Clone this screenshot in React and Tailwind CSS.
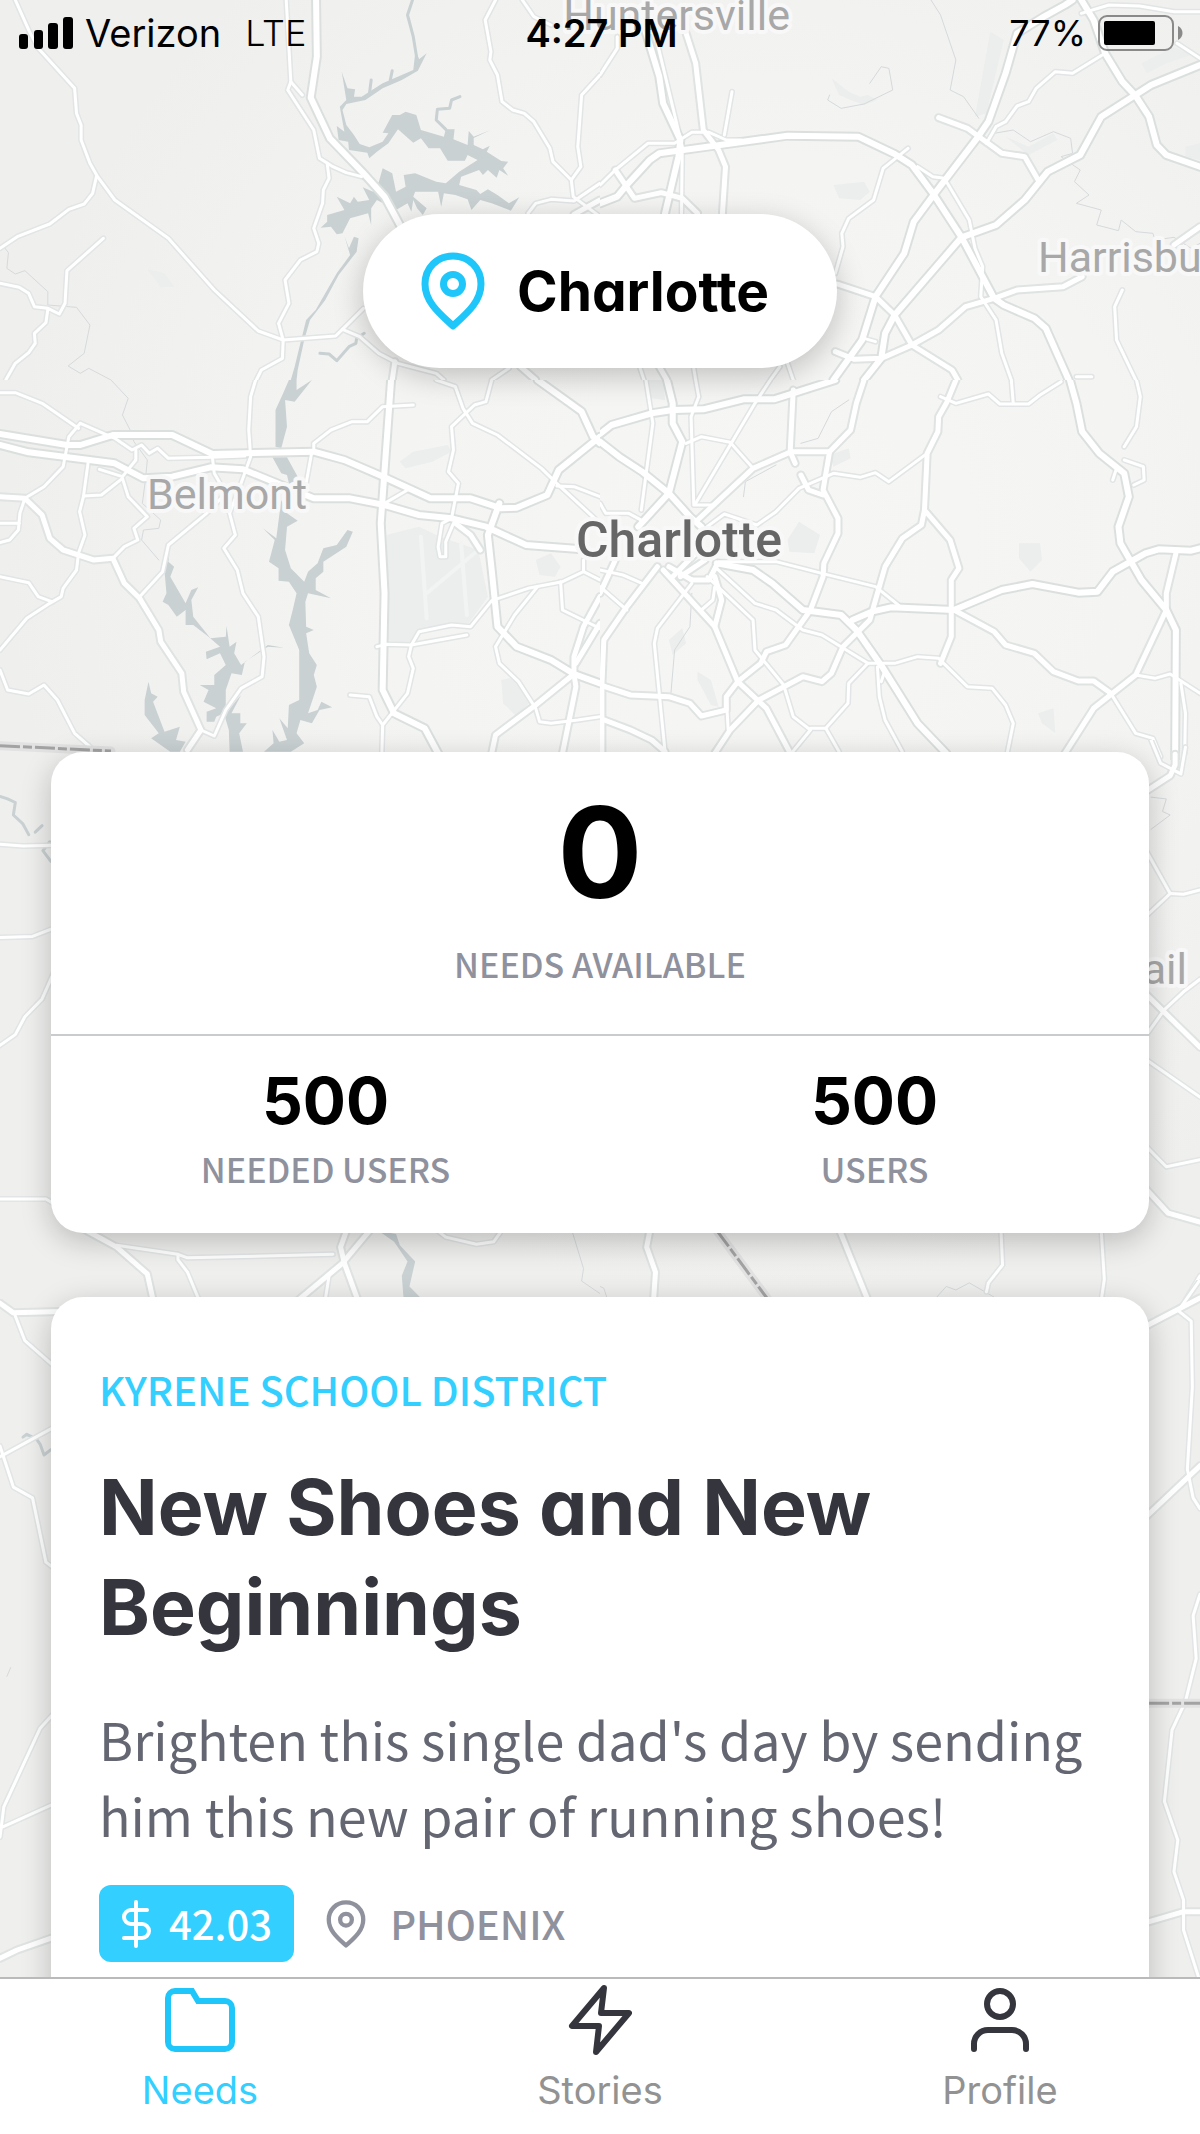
import React from "react";

// Each tile lists its own geometry in local units; the map stitches them together.
const tiles = [
  {
    x: 0, y: 0, w: 600, h: 380, vw: 1568, vh: 1140,
    water: [
      "1086 150 1095 178 1115 160 1092 212 1050 240 1000 265 955 300 905 312 895 330 905 375 925 405 940 432 965 442 1000 425 1015 400 1000 398 1025 345 1045 345 1060 335 1088 345 1100 390 1160 410 1165 388 1188 388 1185 418 1222 435 1225 393 1238 410 1282 390 1238 414 1238 435 1262 448 1280 437 1272 455 1310 483 1328 485 1315 505 1328 527 1305 510 1298 533 1275 510 1262 525 1252 510 1205 530 1200 555 1245 570 1255 582 1275 568 1300 585 1330 610 1357 592 1335 632 1285 610 1255 600 1232 630 1222 598 1190 585 1160 580 1153 620 1145 575 1085 575 1080 590 1115 625 1105 645 1090 625 1080 600 1075 635 1065 610 1035 630 985 600 970 625 970 675 962 640 915 655 895 700 880 703 865 680 838 683 855 665 855 645 900 630 880 590 915 610 925 590 935 605 965 600 948 562 975 575 990 545 1000 505 1025 520 1035 575 1060 560 1055 525 1085 520 1140 545 1165 550 1200 515 1248 480 1222 465 1215 482 1170 482 1150 445 1120 445 1100 415 1080 428 1040 388 1015 430 985 455 965 475 960 458 912 450 910 425 885 420 880 378 900 395 888 320 905 300 893 215 908 265 928 268 925 290 945 290 1000 250 1080 210",
      "900 708 912 745 925 710 937 715 932 755 885 825 850 900 810 960 795 1020 778 1110 775 1140 760 1140 770 1100 785 1030 800 960 825 930 880 820 915 765",
    ],
    creek: [
      "1078 0 1065 45 1080 110 1090 180",
      "1202 290 1180 300 1175 325 1143 328 1140 360 1165 388",
      "836 1060 860 1062 880 1082 912 1040 930 1030 932 1015 952 1000",
      "965 285 970 240", "1020 240 1025 212",
    ],
    thin: ["10 740 22 758 18 805 40 822 65 812 125 875 125 915 200 922 235 975 220 1060 178 1098 210 1120 232 1105 290 1140"],
    park: ["385 808 430 820 455 860 420 862"],
    minor: [
      "40 0 77 95 100 145 195 265 200 340 212 375 212 420 235 490 255 530 300 600 440 715 560 870 675 993 740 1020 877 1008 895 988 950 925",
      "252 530 242 580 220 612 180 628 130 672 45 710 0 745",
      "748 0 760 245 790 285",
      "760 245 752 270 820 390 835 475 870 500 905 518 945 530",
      "855 490 860 535 845 570 843 610 820 685 833 730 828 755 785 780 745 840 755 910 728 970 740 1020 738 1075 683 1110 670 1140",
      "270 715 175 812 170 910 155 942 125 925 90 920 75 880 50 862 0 850",
      "125 928 120 968 90 1000 92 1030 75 1058 40 1090 15 1140",
      "895 988 940 1010 990 1060 1040 1090 1140 1120 1160 1140",
      "1295 0 1268 60 1283 155 1280 180 1300 225 1312 305 1340 330 1370 340 1395 365 1437 445 1445 485 1493 540 1498 590 1568 650",
      "1568 225 1520 285 1510 440 1518 500 1493 540",
      "1365 0 1395 50 1440 75",
      "1380 640 1400 610 1440 598 1500 603 1568 550",
      "1285 1140 1330 1105",
    ],
    road: ["1032 1085 1025 1140", "1500 643 1568 600", "1360 1100 1400 1140"],
    highway: ["826 0 828 170 812 293 862 415 950 520 1005 590 1045 675"],
  },
  {
    x: 600, y: 0, w: 600, h: 380, vw: 1568, vh: 1140,
    park: [
      "1020 95 1055 120 1010 340 980 350",
      "605 235 650 275 680 290 700 285 725 300 690 315 655 300 625 285",
      "610 555 690 545 705 575 680 600 625 595",
      "1060 410 1120 440 1185 400 1195 420 1120 465",
      "1415 190 1500 140 1545 165 1480 190 1430 220",
      "1530 440 1568 430 1568 480 1530 470",
    ],
    thin: [
      "865 0 890 45 930 180 915 270 950 290 990 355",
      "1030 400 1080 390 1125 425 1185 395 1230 415 1235 460 1205 470 1255 510 1240 545 1278 585 1245 610 1310 630 1298 675 1355 692 1362 660 1400 695 1445 700 1450 720 1500 712 1545 745 1568 730",
      "600 285 595 300 630 325 690 312 765 270 755 205 735 200 705 250",
    ],
    minor: [
      "150 130 215 440 213 640",
      "345 275 325 405",
      "0 555 40 510 125 430 195 430 240 397 285 397 330 420 370 420",
      "0 225 45 145 45 110",
      "1320 160 1235 220 1190 215 1140 265 1120 305 1090 318 1060 365 1035 380 1010 430",
      "1258 40 1330 15 1410 18 1500 35 1568 35",
      "805 445 740 505 715 600 650 655 632 700 635 740 615 820",
      "830 500 870 530 900 535 965 660 980 745 1000 800 995 890 1035 960 1050 1060 1075 1140",
      "690 1015 720 1025",
      "1365 870 1345 920 1350 1020 1400 1140",
      "1245 1130 1285 1130", "105 1105 115 1140", "245 1105 250 1140", "490 1090 505 1140", "470 1100 445 1140",
      "1508 130 1568 175",
    ],
    road: [
      "225 100 250 190 270 390 310 450 328 500 320 640",
      "40 510 90 595 160 578 215 595 255 640",
      "885 353 960 385 1050 460 1110 470 1145 540",
      "1568 680 1500 735",
      "620 852 720 890 770 945 815 1035 920 1110 935 1140",
      "615 1055 665 1078 735 1075 815 1035 885 990 955 920 1030 895 1090 870 1210 860 1260 830",
      "155 1100 175 1140",
    ],
    highway: [
      "1235 0 1215 15 1160 50 1090 100 1060 220 1015 365 985 415 875 580 820 665 795 760 720 890 685 1020 610 1140",
      "1258 0 1290 60 1320 160 1365 245 1400 288 1435 350 1455 435 1480 465 1568 500",
      "1568 195 1440 255 1310 350 1255 465 1170 515 1110 600 1035 675 945 712 770 945 745 1000 735 1075 690 1140",
      "0 610 45 590 70 555 130 480 155 460 300 437 490 407 675 410 770 462 815 495 870 580 945 712 1030 895 1055 915 1135 955 1165 985 1225 1140",
      "118 90 155 230 165 310 210 420 205 470 170 640",
    ],
  },
  {
    x: 0, y: 380, w: 600, h: 380, vw: 1568, vh: 1140,
    park: [
      "1010 465 1095 440 1150 470 1250 510 1275 650 1225 730 1095 755 1075 795 1010 780",
      "1045 245 1080 215 1170 195 1180 215 1130 245 1060 265",
      "1400 540 1440 520 1465 560 1450 590 1410 585",
      "1310 900 1350 890 1390 960 1350 1010 1315 970",
    ],
    runway: ["1100 470 1115 715", "1205 490 1220 705", "1115 640 1250 510"],
    water: [
      "755 0 775 0 775 30 815 0 770 65 745 60 750 140 735 205 720 200 720 90 740 40",
      "712 232 750 232 778 290 770 310 755 310 750 285 735 280",
      "735 360 750 400 778 422 750 440 745 510 760 565 795 605 805 575 830 550 845 505 880 495 908 450 922 455 905 500 845 545 845 575 825 595 825 630 865 655 805 640 798 665 800 740 820 750 800 760 808 820 828 855 820 885 828 920 805 1000 830 990 840 965 868 982 835 990 815 1030 785 1020 775 1060 795 1090 760 1115 690 1115 715 1090 712 1050 730 1085 750 1080 730 1015 752 1045 755 975 782 960 782 810 755 735 765 690 775 640 755 605 728 602 728 565 703 545 718 480 687 445 722 475",
      "443 520 440 545 455 560 445 590 485 670 500 630 518 622 500 660 505 710 550 775 590 770 592 738 600 800 618 785 612 820 630 855 700 795 742 803 700 800 640 845 632 885 605 880 590 930 590 1000 630 945 605 1000 628 1000 628 1030 645 1030 625 1060 635 1115 600 1115 598 1050 585 1000 565 1010 560 1025 540 1025 540 995 565 985 532 965 545 930 522 915 560 915 560 885 590 855 575 820 540 838 538 815 575 800 545 770 505 735 485 735 485 690 462 710 440 675 425 665 435 640 430 575",
      "388 905 395 940 412 950 400 965 430 1055 470 1040 460 1080 485 1085 470 1115 445 1115 395 1075 415 1060 378 1005 378 960",
    ],
    thin: ["290 0 335 55 320 105 340 150 350 185 385 240 380 300 372 370 420 420 415 445 375 450 370 480 415 540"],
    minor: [
      "0 38 40 38 110 70 205 145",
      "210 130 180 170 165 260 115 320 65 355",
      "210 130 300 175 345 210 370 195 390 220 412 205 440 235 555 232 640 228",
      "230 250 218 350 208 395 222 465 205 520 200 570 165 625 160 650 130 670 70 715 0 810",
      "218 348 265 345 320 295 335 350 385 410 350 445 360 480 325 500 295 535",
      "355 210 355 240 320 290 260 268",
      "668 0 655 50 650 150 655 230 630 310 600 400 615 465 585 505 620 570 635 640 675 710 690 830 685 890 630 925 590 990 560 1068 525 1050",
      "555 232 560 280 590 340 540 400 440 495 425 575 365 650",
      "0 590 75 608 100 650 135 665",
      "0 430 50 430",
      "65 355 52 400 48 450 25 480 0 488",
      "0 870 20 930 75 942 115 915 150 960 195 1060 240 1105",
      "815 215 800 310",
      "820 215 820 190 865 150 920 125 960 125 1000 80 1080 75",
      "1140 0 1190 20 1210 85 1235 130 1300 165 1415 265 1455 310 1568 430",
      "1285 0 1270 65 1240 75 1180 140 1185 210 1172 275 1198 310 1180 415",
      "1180 415 1155 430 1145 500 1150 530 1165 530 1165 485 1185 430",
      "1455 318 1500 320 1568 350",
      "1005 370 1065 330",
      "985 800 1010 793 1075 795 1095 755 1180 735 1230 740 1285 662 1380 625 1470 605 1525 575 1525 540",
      "1075 795 1220 765",
      "1075 795 1068 830 1080 865 1065 940 1000 1035 998 1115",
      "915 945 965 950 985 1010 1000 1035",
      "1405 620 1345 705 1295 800 1305 850 1355 905 1400 985 1410 1025 1440 1030 1510 1020 1568 1010",
      "1465 605 1470 690 1568 745",
      "1525 575 1568 600",
    ],
    road: [
      "0 350 65 355 110 405 130 475 165 510 245 540 295 535 325 610 365 655 415 750 420 785 475 880 480 935 525 1050 490 1110",
      "1190 430 1230 465 1255 510",
      "1500 882 1500 830 1525 740 1568 650",
      "1505 850 1568 730",
      "1500 882 1505 920 1470 1120",
      "1500 882 1400 975 1295 1065 1285 1120",
    ],
    highway: [
      "0 162 175 195 210 195 295 165 450 165 555 222 820 215 900 240 1005 292 1125 355 1230 355 1310 385 1350 383 1430 345 1460 270 1568 170",
      "0 195 75 217 300 250 375 295 450 290 550 262 635 268 820 355 915 355 1005 375 1095 405 1180 415 1270 440 1375 495 1520 508",
      "1022 0 995 430 1005 640 1000 930 1030 1000 1110 1045 1145 1120",
      "1305 370 1275 465 1285 570 1300 740 1350 800 1440 840 1500 882 1568 910",
      "1405 0 1520 95 1550 170 1568 190",
    ],
    border: ["0 1097 290 1113"],
  },
  {
    x: 600, y: 380, w: 600, h: 380, vw: 1568, vh: 1140,
    park: [
      "520 425 575 465 560 520 495 515 490 480",
      "1095 490 1150 490 1155 540 1125 575 1095 535",
      "255 875 290 900 310 980 290 975 255 900",
      "180 780 215 745 225 790 190 825",
      "125 0 165 0 170 60 135 55",
      "600 225 650 205 655 235 610 260",
      "1145 1000 1185 985 1190 1060 1155 1030",
    ],
    thin: ["650 60 605 95 570 175 525 190", "240 640 235 740 195 810 185 945", "460 255 380 305 375 350"],
    minor: [
      "1400 885 1450 895 1490 882 1568 940",
      "1335 940 1400 1060 1445 1075 1465 1130",
      "1518 910 1530 1000 1528 1120",
      "890 50 930 70 1015 42 1045 72 1120 72 1150 45 1205 5",
      "1075 0 1080 70",
      "1402 0 1412 50 1402 140 1370 200",
      "1370 240 1420 260 1422 300 1395 315",
      "1350 265 1340 300",
      "855 220 755 305 720 278 680 292 610 280 520 325 460 395 410 435 325 402 280 440",
      "120 0 138 130 108 390",
      "250 0 258 50 238 110 245 370",
      "445 0 405 70 250 370",
      "225 190 265 170 340 187 400 265",
      "245 375 300 375",
      "310 545 460 545 580 580 720 620 785 680",
      "280 590 400 720 405 810 480 915 505 1010 550 1050 500 1120",
      "300 560 405 670 460 690 530 750 580 765 700 850 770 850 830 830 885 835 960 920 1025 925 1060 975 1080 1030 1065 1115",
      "700 850 650 910 648 970 590 1045 550 1045",
      "590 1045 625 1115",
      "725 860 730 950 745 1020 790 1115",
      "745 870 735 905",
      "240 610 150 745 142 790 160 1000 170 1115",
      "300 620 295 660 265 690",
      "330 950 335 1050",
      "0 370 15 400 75 400 115 425",
      "0 570 60 585 110 610",
      "0 620 70 690",
    ],
    road: [
      "505 30 497 215 510 250",
      "690 0 670 70 655 150 600 215 500 215 400 265 255 420",
      "600 215 583 330 622 415 622 460 585 550 583 590 550 690 485 795 435 815 420 850 360 905 330 950 330 990 265 1008 235 970 180 950 80 945 0 915",
      "930 0 905 70 885 110 883 155 855 220 848 390 840 435 790 475 745 560 705 720 635 800 605 880 580 905 530 890 415 960 340 1050 300 1120",
      "848 390 915 480 938 565 918 600 918 690 918 770 890 850",
      "925 690 1030 755 1060 795 1135 820 1185 875 1250 903 1290 903 1335 940",
      "1505 520 1480 640 1480 690 1400 885 1290 985 1215 1120",
      "525 285 545 330 583 345",
      "300 590 318 660 300 740",
      "165 570 300 740 360 905 435 985 495 1115",
      "150 560 70 680 10 780 5 915 5 1140",
      "0 640 40 540",
      "0 1015 80 1050 135 1080 170 1115",
      "190 590 250 520", "210 590 275 540", "240 600 285 600 305 555", "180 560 240 600",
    ],
    highway: [
      "175 0 190 70 190 130 215 185 180 340 100 440",
      "0 185 50 230 110 275 180 340 235 410 265 440",
      "0 162 30 135 135 100 190 90 270 88 375 58 455 58 615 0",
      "305 550 400 570 450 610 530 690 630 705 670 750 740 865 830 1030 905 1120",
      "660 720 710 695 760 682 925 690 1050 630 1130 612 1250 638 1300 635 1340 575 1425 520 1460 508 1545 512 1568 505",
      "1228 0 1245 70 1260 155 1305 220 1370 280 1382 350 1355 440 1360 490 1415 600 1480 690 1505 750 1503 1140",
    ],
  },
  {
    x: 0, y: 740, w: 600, h: 560, vw: 1568, vh: 1568,
    water: ["990 1375 1035 1383 1045 1415 1085 1460 1070 1530 1105 1568 1055 1568 1050 1500 1065 1460 1030 1405"],
    creek: ["0 158 20 165 40 175 35 210 60 235 75 265", "92 258 110 240", "130 285 112 310 133 340"],
    thin: ["1495 1375 1525 1480 1520 1515 1568 1550"],
    minor: [
      "0 292 60 297 145 295", "0 553 85 550 145 525", "145 640 110 725 65 775 40 825 0 855", "0 1285 120 1285 150 1305",
      "305 1415 465 1440 490 1450 870 1440",
      "465 1440 465 1455 490 1490 520 1568",
      "1145 1375 1165 1392 1245 1412 1290 1405 1310 1375",
      "860 1500 850 1568",
    ],
    road: ["220 1370 305 1420 385 1495 400 1568", "905 1375 890 1420 900 1465 935 1568", "965 1375 895 1465 780 1568"],
  },
  {
    x: 600, y: 740, w: 600, h: 560, vw: 1568, vh: 1568,
    thin: ["0 1530 10 1535 20 1568", "880 1560 905 1530 930 1540 965 1520 1030 1560", "1440 160 1480 165 1470 200 1490 210 1440 250"],
    minor: [
      "1048 1375 1052 1470 1015 1520 1010 1545", "1310 1375 1318 1510 1310 1568", "1568 1500 1530 1568",
      "1440 0 1465 65 1518 95 1530 20", "1425 305 1490 430 1425 495", "1490 430 1525 432 1568 420",
      "1568 670 1525 705 1475 755 1425 830", "1425 893 1568 1000", "1425 1135 1480 1195 1568 1175",
    ],
    road: ["130 1375 122 1420 145 1490 140 1568", "625 1370 700 1568", "1425 145 1490 100 1503 70 1503 40", "1425 710 1568 860", "1425 1255 1485 1325 1568 1350"],
    border: ["305 1373 440 1568"],
  },
  {
    x: 0, y: 1280, w: 600, h: 560, vw: 1568, vh: 1568,
    creek: ["60 440 70 432 85 440", "95 445 105 460 115 490 133 475"],
    thin: ["18 1110 28 1085"],
    minor: ["38 95 65 170 145 245", "145 410 0 495", "0 465 35 580 85 610 120 790 145 810", "145 1208 105 1255 10 1475 0 1560", "0 1535 145 1465"],
    road: ["0 65 35 92 160 88"],
  },
  {
    x: 600, y: 1280, w: 600, h: 560, vw: 1568, vh: 1568,
    minor: ["1510 85 1545 115 1548 300 1535 530 1550 610 1568 640", "1568 0 1515 80", "1568 880 1550 940 1558 1060 1530 1180 1495 1260 1475 1460 1510 1568"],
    road: ["1420 133 1568 50", "1420 670 1568 520"],
    border: ["1435 1185 1568 1185"],
  },
  {
    x: 0, y: 1840, w: 600, h: 294, vw: 1568, vh: 882,
    road: ["0 355 45 330 145 290"],
  },
  {
    x: 600, y: 1840, w: 600, h: 294, vw: 1568, vh: 882,
    minor: ["1510 0 1500 95 1525 180 1525 270 1568 425"],
    road: ["1420 250 1525 215 1568 215"],
  },
];

const places = [
  { name: "Huntersville", x: 790, y: 30, anchor: "end" },
  { name: "Harrisburg", x: 1038, y: 272, anchor: "start" },
  { name: "Belmont", x: 147, y: 509, anchor: "start" },
  { name: "Indian Trail", x: 1187, y: 984, anchor: "end" },
];

const Lines = ({ items = [], color, width, dash }) =>
  items.map((points, i) => (
    <polyline
      key={i}
      points={points}
      fill="none"
      stroke={color}
      strokeWidth={width}
      strokeDasharray={dash}
      strokeLinecap={dash ? "butt" : "round"}
      strokeLinejoin="round"
      vectorEffect="non-scaling-stroke"
    />
  ));

const Areas = ({ items = [], color }) =>
  items.map((points, i) => <polygon key={i} points={points} fill={color} />);

const Tile = ({ tile }) => (
  <svg
    x={tile.x}
    y={tile.y}
    width={tile.w}
    height={tile.h}
    viewBox={`0 0 ${tile.vw} ${tile.vh}`}
    preserveAspectRatio="none"
  >
    <Areas items={tile.park} color="#ebeeed" />
    <Lines items={tile.runway} color="#f2f4f4" width={4} />
    <Areas items={tile.water} color="#c9d1d3" />
    <Lines items={tile.creek} color="#c9d1d3" width={3} />
    <Lines items={tile.thin} color="#d6dadc" width={1} />
    <Lines items={tile.minor} color="#e2e5e5" width={6} />
    <Lines items={tile.road} color="#dfe3e2" width={9} />
    <Lines items={tile.highway} color="#dbe0df" width={10} />
    <Lines items={tile.minor} color="#ffffff" width={3} />
    <Lines items={tile.road} color="#ffffff" width={5} />
    <Lines items={tile.highway} color="#ffffff" width={6} />
    <Lines items={tile.border} color="#e2e2e2" width={9} />
    <Lines items={tile.border} color="#a3a3a3" width={3} dash="20 3 9 3" />
  </svg>
);

const MapBackground = () => (
  <svg
    className="absolute inset-0 w-full h-full"
    viewBox="0 0 1200 2134"
    preserveAspectRatio="xMidYMid slice"
    aria-hidden="true"
  >
    <defs>
      <radialGradient id="land" gradientUnits="userSpaceOnUse" cx="760" cy="540" r="760">
        <stop offset="0" stopColor="#f6f6f5" />
        <stop offset="0.5" stopColor="#f4f4f3" />
        <stop offset="1" stopColor="#efefee" />
      </radialGradient>
    </defs>
    <rect width="1200" height="2134" fill="url(#land)" />
    {tiles.map((tile, i) => (
      <Tile key={i} tile={tile} />
    ))}
    <g
      fontFamily="Roboto, sans-serif"
      stroke="#f8f8f8"
      strokeWidth="8"
      strokeLinejoin="round"
      paintOrder="stroke"
    >
      {places.map((place) => (
        <text
          key={place.name}
          x={place.x}
          y={place.y}
          textAnchor={place.anchor}
          fontSize="43"
          fill="#a8a8a8"
        >
          {place.name}
        </text>
      ))}
      <text x="679" y="557" textAnchor="middle" fontSize="50" fontWeight="500" fill="#666666">
        Charlotte
      </text>
    </g>
  </svg>
);

const PinIcon = ({ className, strokeWidth = 7 }) => (
  <svg className={className} viewBox="0 0 64 78" fill="none" stroke="currentColor" strokeWidth={strokeWidth}>
    <path d="M32 4C16 4 4 16 4 32c0 18 15 30 28 42 13-12 28-24 28-42C60 16 48 4 32 4z" strokeLinejoin="round" />
    <circle cx="32" cy="32" r="9.500" />
  </svg>
);

const DollarIcon = () => (
  <svg className="w-[30px] h-12" viewBox="0 0 30 48" fill="none" stroke="currentColor" strokeWidth="4" strokeLinecap="round">
    <path d="M15 2v44M26 10H10a7 7 0 0 0 0 14h11a7 7 0 0 1 0 14H3" />
  </svg>
);

const FolderIcon = () => (
  <svg className="w-[70px] h-16" viewBox="0 0 70 64" fill="none" stroke="currentColor" strokeWidth="6">
    <path d="M10 3h17l6 10h27a7 7 0 0 1 7 7v34a7 7 0 0 1-7 7H10a7 7 0 0 1-7-7V10a7 7 0 0 1 7-7z" />
  </svg>
);

const BoltIcon = () => (
  <svg className="w-16 h-[72px]" viewBox="0 0 64 72" fill="none" stroke="currentColor" strokeWidth="6" strokeLinejoin="round">
    <path d="M36 4L4 42h27l-3 26 33-39H33z" />
  </svg>
);

const UserIcon = () => (
  <svg className="w-[58px] h-16" viewBox="0 0 58 64" fill="none" stroke="currentColor" strokeWidth="6" strokeLinecap="round">
    <circle cx="29" cy="16" r="13" />
    <path d="M3 61v-5a14 14 0 0 1 14-14h24a14 14 0 0 1 14 14v5" />
  </svg>
);

const tabs = [
  { icon: <FolderIcon />, text: "Needs", active: true },
  { icon: <BoltIcon />, text: "Stories" },
  { icon: <UserIcon />, text: "Profile" },
];

const StatusBar = () => (
  <header className="relative grid grid-cols-[1fr_auto_1fr] items-center h-[66px] pl-[19px] pr-4 text-[36px] leading-none font-[Inter,sans-serif] text-black">
    <div className="flex items-center gap-3">
      <svg className="w-[54px] h-8" viewBox="0 0 54 32" aria-label="Signal">
        <rect x="0" y="17" width="9" height="15" rx="3" />
        <rect x="15" y="13" width="9" height="19" rx="3" />
        <rect x="29" y="6" width="10" height="26" rx="3" />
        <rect x="44" y="0" width="10" height="32" rx="3" />
      </svg>
      <span className="text-[38px]">Verizon</span>
      <span className="ml-3 font-light">LTE</span>
    </div>
    <time className="text-[38px] font-semibold">4:27 PM</time>
    <div className="flex items-center justify-end gap-3">
      <span>77%</span>
      <svg className="w-[86px] h-9" viewBox="0 0 86 36" aria-label="Battery">
        <rect x="1" y="1" width="74" height="34" rx="8" fill="none" stroke="#8a8a8a" strokeWidth="2" />
        <rect x="6" y="6" width="51" height="24" rx="2" />
        <path d="M80 11c6 3 6 11 0 14z" fill="#8a8a8a" />
      </svg>
    </div>
  </header>
);

const Stat = ({ value, label }) => (
  <div className="flex flex-col items-center gap-3 pt-[29px] pb-11">
    <span className="text-[64px] leading-[72px] font-bold font-[Inter,sans-serif] text-black">{value}</span>
    <span className="text-[34px] leading-10 font-medium text-[#8f919d]">{label}</span>
  </div>
);

const StatsCard = () => (
  <section className="rounded-[32px] bg-white shadow-[0_8px_30px_rgba(0,0,0,0.22)]">
    <div className="flex flex-col items-center gap-5 pt-7 pb-[50px] border-b-2 border-[#c9cbcc]">
      <span className="text-[126px] leading-[144px] font-bold font-[Inter,sans-serif] text-black">0</span>
      <span className="text-[34px] leading-10 font-medium text-[#8f919d]">NEEDS AVAILABLE</span>
    </div>
    <div className="grid grid-cols-2">
      <Stat value="500" label="NEEDED USERS" />
      <Stat value="500" label="USERS" />
    </div>
  </section>
);

const NeedCard = () => (
  <article className="rounded-[32px] bg-white px-12 pt-[68px] pb-16 shadow-[0_8px_30px_rgba(0,0,0,0.22)]">
    <p className="text-[40px] leading-[48px] font-medium text-[#33cfff]">KYRENE SCHOOL DISTRICT</p>
    <h2 className="mt-11 max-w-[860px] text-[77px] leading-[100px] font-bold font-[Inter,sans-serif] [font-feature-settings:'cv11'] text-[#34353d]">
      New Shoes and New Beginnings
    </h2>
    <p className="mt-11 text-[52px] leading-[76px] text-[#646672]">
      Brighten this single dad's day by sending him this new pair of running shoes!
    </p>
    <div className="flex items-center gap-8 mt-8 text-[40px] leading-[77px] font-medium">
      <span className="flex items-center gap-[18px] rounded-xl bg-[#33cfff] px-[22px] text-white">
        <DollarIcon />
        42.03
      </span>
      <span className="flex items-center gap-6 text-[#8f919d]">
        <PinIcon className="w-10 h-12" />
        PHOENIX
      </span>
    </div>
  </article>
);

const TabBar = () => (
  <nav className="relative grid grid-cols-3 h-[157px] shrink-0 border-t-2 border-[#bababa] bg-white font-[Inter,sans-serif]">
    {tabs.map((tab) => (
      <button
        key={tab.text}
        type="button"
        className={`flex flex-col items-center gap-3 pt-[5px] cursor-pointer ${tab.active ? "text-[#1fc6fa]" : "text-[#34353d]"}`}
      >
        <span className="flex items-center justify-center h-[72px]">{tab.icon}</span>
        <span className={`text-[38px] leading-[44px] ${tab.active ? "text-[#33cfff]" : "text-[#929292]"}`}>
          {tab.text}
        </span>
      </button>
    ))}
  </nav>
);

const App = () => {
  return (
    <div className="relative flex flex-col h-screen overflow-hidden bg-[#f1f1f0] font-['Noto_Sans_CJK_SC',sans-serif]">
      <MapBackground />
      <StatusBar />
      <main className="relative flex-1 min-h-0 overflow-hidden px-[51px] pt-[148px]">
        <button
          type="button"
          className="flex items-center gap-8 mx-auto h-[154px] rounded-full bg-white pl-[58px] pr-[68px] text-[55px] leading-none font-bold font-[Inter,sans-serif] [font-feature-settings:'cv11'] text-black shadow-[0_8px_30px_rgba(0,0,0,0.22)] cursor-pointer"
        >
          <PinIcon className="w-16 h-[78px] text-[#1fc6fa]" />
          Charlotte
        </button>
        <div className="flex flex-col gap-16 mt-96">
          <StatsCard />
          <NeedCard />
        </div>
      </main>
      <TabBar />
    </div>
  );
};

export default App;
